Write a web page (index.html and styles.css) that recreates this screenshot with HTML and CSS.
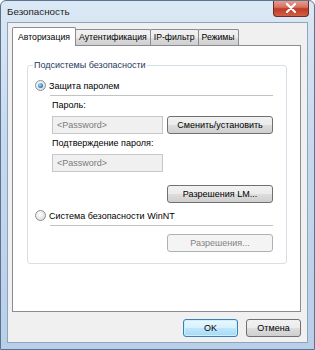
FILE: index.html
```html
<!DOCTYPE html>
<html lang="ru">
<head>
<meta charset="utf-8">
<link rel="stylesheet" href="styles.css">
</head>
<body>
<div class="window">
  <div class="titlebar">
    <span class="title">Безопасность</span>
    <div class="close">
      <svg width="12" height="10" viewBox="0 0 12 10"><path d="M2 1 L10 9 M10 1 L2 9" stroke="#fff" stroke-width="2.2" stroke-linecap="round"/></svg>
    </div>
  </div>
  <div class="client">
    <div class="tabs">
      <div class="tab active">Авторизация</div>
      <div class="tab">Аутентификация</div>
      <div class="tab">IP-фильтр</div>
      <div class="tab">Режимы</div>
    </div>
    <div class="panel">
      <div class="group">
        <div class="legend">Подсистемы безопасности</div>
        <div class="radio-row">
          <span class="radio checked"><span class="dot"></span></span>
          <span>Защита паролем</span>
        </div>
        <div class="sep"></div>
        <div class="sub">
          <div class="lbl">Пароль:</div>
          <div class="field-row">
            <div class="input">&lt;Password&gt;</div>
            <div class="btn">Сменить/установить</div>
          </div>
          <div class="lbl lbl2">Подтверждение пароля:</div>
          <div class="field-row">
            <div class="input">&lt;Password&gt;</div>
          </div>
          <div class="field-row right">
            <div class="btn">Разрешения LM...</div>
          </div>
        </div>
        <div class="radio-row r2">
          <span class="radio"></span>
          <span>Система безопасности WinNT</span>
        </div>
        <div class="sep"></div>
        <div class="sub">
          <div class="field-row right last">
            <div class="btn disabled">Разрешения...</div>
          </div>
        </div>
      </div>
    </div>
    <div class="footer">
      <div class="btn dlg default">OK</div>
      <div class="btn dlg">Отмена</div>
    </div>
  </div>
</div>
</body>
</html>
```

FILE: styles.css
```css
html, body {
  margin: 0;
  padding: 0;
  background: #fff;
}
body {
  font-family: "Liberation Sans", Arial, sans-serif;
  font-size: 9px;
  color: #000;
  white-space: nowrap;
}
.window {
  width: 315px;
  height: 350px;
  box-sizing: border-box;
  border: 1px solid #5b7390;
  border-radius: 6px 6px 0 0;
  background: linear-gradient(180deg, #dbe8f5 0%, #c6d9ee 40%, #b9cfe8 100%);
  display: flex;
  flex-direction: column;
  overflow: hidden;
}
.titlebar {
  height: 21px;
  display: flex;
  justify-content: space-between;
  align-items: flex-start;
  padding-left: 6px;
  padding-right: 5px;
}
.title {
  margin-top: 5px;
  font-size: 9.8px;
  color: #1e1e1e;
}
.close {
  width: 36px;
  height: 17px;
  margin-top: -1px;
  box-sizing: border-box;
  border: 1px solid #6e2a25;
  border-top: none;
  border-radius: 0 0 4px 4px;
  background: linear-gradient(180deg, #e8a495 0%, #d5735e 45%, #c0392a 55%, #d1603f 100%);
  display: flex;
  align-items: center;
  justify-content: center;
}
.client {
  flex: 1;
  margin: 0 6px 6px 6px;
  border: 1px solid #8ea4bd;
  background: #f0f0f0;
  display: flex;
  flex-direction: column;
  padding: 5px 6px 0 4px;
}
.tabs {
  display: flex;
  align-items: flex-end;
  height: 17px;
  position: relative;
  z-index: 1;
}
.tab {
  height: 15px;
  line-height: 15px;
  padding: 0 3px;
  font-size: 8.7px;
  border: 1px solid #898c95;
  border-bottom: none;
  margin-right: -1px;
  background: linear-gradient(180deg, #f2f2f2 0%, #ebebeb 50%, #dddddd 51%, #cfcfcf 100%);
  border-radius: 2px 2px 0 0;
}
.tab.active {
  height: 18px;
  line-height: 18px;
  margin-bottom: -1px;
  background: #fff;
  padding: 0 5px;
  position: relative;
  z-index: 2;
}
.panel {
  height: 267px;
  box-sizing: border-box;
  border: 1px solid #898c95;
  background: #fff;
  padding: 19px 13px 0 14px;
}
.group {
  height: 199px;
  box-sizing: border-box;
  border: 1px solid #d5dfe5;
  border-radius: 3px;
  position: relative;
  padding: 13px 13px 0 7px;
}
.legend {
  position: absolute;
  top: -7px;
  left: 5px;
  background: #fff;
  padding: 0 1px;
  line-height: 13px;
  color: #1e395b;
}
.radio-row {
  display: flex;
  align-items: center;
  height: 13px;
  gap: 3px;
}
.radio-row.r2 {
  margin-top: 6px;
}
.radio {
  width: 11px;
  height: 11px;
  box-sizing: border-box;
  border: 1px solid #8e8f8f;
  border-radius: 50%;
  background: radial-gradient(circle at 40% 35%, #ffffff 0%, #e6e6e6 60%, #cfcfcf 100%);
  display: flex;
  align-items: center;
  justify-content: center;
}
.radio .dot {
  width: 5px;
  height: 5px;
  border-radius: 50%;
  background: radial-gradient(circle at 40% 35%, #a6e0ff 0%, #2a8ad4 60%, #0c4b8a 100%);
}
.sep {
  height: 1px;
  background: #c2c2c2;
  margin: 3px 0 0 15px;
}
.sub {
  padding-left: 17px;
}
.lbl {
  margin-top: 3px;
  line-height: 13px;
}
.lbl2 {
  margin-top: 3px;
}
.field-row {
  display: flex;
  align-items: center;
  gap: 4px;
  margin-top: 4px;
}
.field-row.right {
  justify-content: flex-end;
  margin-top: 13px;
}
.field-row.right.last {
  margin-top: 8px;
}
.input {
  width: 111px;
  height: 18px;
  box-sizing: border-box;
  border: 1px solid #c7c7c7;
  background: #f0f0f0;
  color: #7b7b7b;
  line-height: 16px;
  padding-left: 4px;
}
.btn {
  width: 106px;
  height: 18px;
  box-sizing: border-box;
  border: 1px solid #707070;
  border-radius: 3px;
  background: linear-gradient(180deg, #f2f2f2 0%, #ebebeb 50%, #dddddd 51%, #cfcfcf 100%);
  text-align: center;
  line-height: 16px;
}
.btn.disabled {
  border-color: #adb2b5;
  background: #f4f4f4;
  color: #838383;
}
.footer {
  display: flex;
  justify-content: flex-end;
  gap: 8px;
  padding: 7px 0 0 0;
}
.btn.dlg {
  width: 55px;
}
.btn.default {
  border-color: #3c7fb1;
  background: linear-gradient(180deg, #eaf6fd 0%, #d9f0fc 50%, #bee6fd 51%, #a7d9f5 100%);
  box-shadow: inset 0 0 0 1px #c6f1ff;
}
```
